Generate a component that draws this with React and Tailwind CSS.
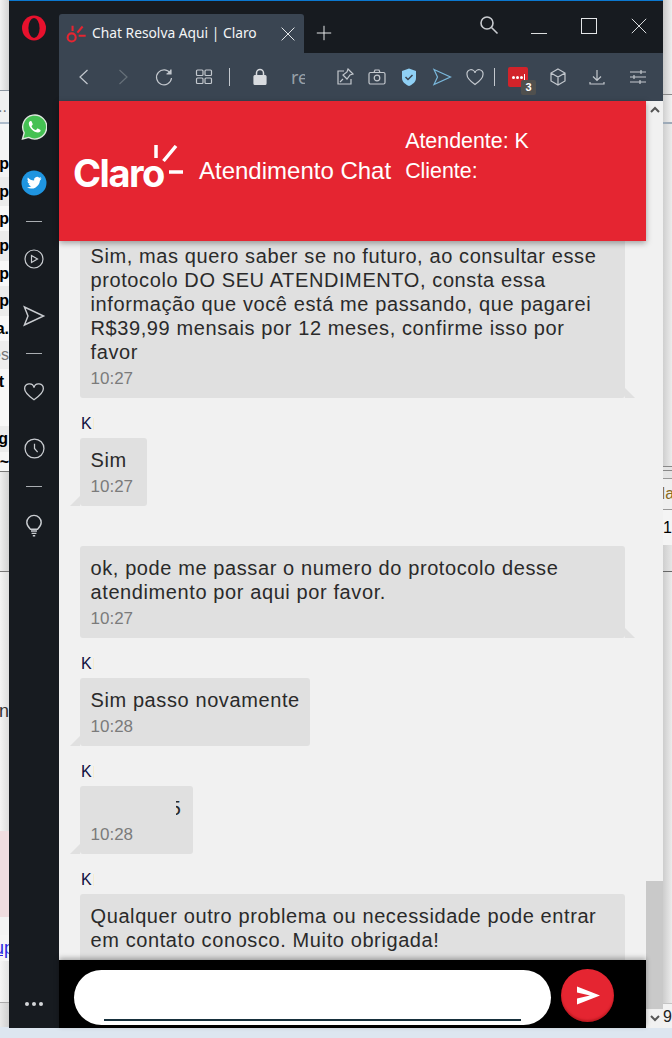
import React from 'react';

const leftRows = [
    { h: 'h-[90px]', bg: 'bg-gradient-to-r from-[#f2f2f2] to-[#d4d4d4]' },
    { h: 'h-px', bg: 'bg-[#8d96a0]' },
    { h: 'h-[31px]', bg: 'bg-[#f0f0f0]', text: '..', cls: 'text-[#777] text-[13px] mr-[2px]' },
    { h: 'h-[2px]', bg: 'bg-[#aebccb]' },
    { h: 'h-[26px]', bg: 'bg-[#f6f6f6]' },
    { h: 'h-[27px]', bg: 'bg-[#f4f4f4]', text: 'p', cls: 'font-bold' },
    { h: 'h-[29px]', bg: 'bg-[#ececec]', text: 'p', cls: 'font-bold' },
    { h: 'h-[25px]', bg: 'bg-[#f8f8f8]', text: 'p', cls: 'font-bold' },
    { h: 'h-[30px]', bg: 'bg-[#ececec]', text: 'p', cls: 'font-bold' },
    { h: 'h-[25px]', bg: 'bg-[#f8f8f8]', text: 'p', cls: 'font-bold' },
    { h: 'h-[30px]', bg: 'bg-[#ececec]', text: 'p', cls: 'font-bold' },
    { h: 'h-[25px]', bg: 'bg-[#f8f8f8]', text: 'a.', cls: 'font-bold' },
    { h: 'h-[28px]', bg: 'bg-[#eeeeee]', text: 'es', cls: 'text-[#777]' },
    { h: 'h-[25px]', bg: 'bg-[#f8f8f8]', text: 't', cls: 'font-bold mr-[5px]' },
    { h: 'h-[32px]', bg: 'bg-[#f8f8f8]' },
    { h: 'h-[26px]', bg: 'bg-[#ececec]', text: 'g', cls: 'font-bold mr-px' },
    { h: 'h-[19px]', bg: 'bg-[#f6f6f6]', text: '~', cls: 'font-bold' },
    { h: 'h-px', bg: 'bg-[#777]' },
    { h: 'h-[99px]', bg: 'bg-gradient-to-r from-[#eeeeee] to-[#d2d2d2]' },
    { h: 'h-px', bg: 'bg-[#777]' },
    { h: 'h-[125px]', bg: 'bg-gradient-to-r from-[#f4f4f4] to-[#dddddd]' },
    { h: 'h-[27px]', bg: 'bg-gradient-to-r from-[#f4f4f4] to-[#dddddd]', text: 'n', cls: 'text-[#333] !text-[18px]' },
    { h: 'h-[107px]', bg: 'bg-gradient-to-r from-[#f4f4f4] to-[#dddddd]' },
    { h: 'h-[86px]', bg: 'bg-[#f0dde0]' },
    { h: 'h-[18px]', bg: 'bg-[#f4f4f4]' },
    { h: 'h-[26px]', bg: 'bg-[#f6f6f6]', text: 'up', cls: 'text-[#2a2ae0] underline !text-[18px] -mr-[5px]' },
    { h: 'h-[41px]', bg: 'bg-gradient-to-r from-[#f6f6f6] to-[#e2e2e2]' },
    { h: 'h-px', bg: 'bg-[#aaa]' },
    { h: 'h-[24px]', bg: 'bg-gradient-to-r from-[#e8e8e8] to-[#cfcfcf]' },
];

const rightRows = [
    { h: 'h-[94px]', bg: 'bg-gradient-to-r from-[#c8c8c8] to-[#efefef]' },
    { h: 'h-px', bg: 'bg-[#888]' },
    { h: 'h-[27px]', bg: 'bg-gradient-to-r from-[#d0d0d0] to-[#f2f2f2]' },
    { h: 'h-[2px]', bg: 'bg-[#9daab8]' },
    { h: 'h-[342px]', bg: 'bg-gradient-to-r from-[#cfcfcf] to-[#ececec]' },
    { h: 'h-px', bg: 'bg-[#888]' },
    { h: 'h-[3px]', bg: 'bg-[#e4e4e4]' },
    { h: 'h-px', bg: 'bg-[#888]' },
    { h: 'h-[7px]', bg: 'bg-[#e4e4e4]' },
    { h: 'h-px', bg: 'bg-[#999]' },
    { h: 'h-[30px]', bg: 'bg-[#efefef]', text: 'Ma', cls: 'text-[#8a6a20] -ml-[11px]' },
    { h: 'h-px', bg: 'bg-[#999]' },
    { h: 'h-[35px]', bg: 'bg-[#f4f4f4]', text: '10', cls: 'text-black' },
    { h: 'h-[26px]', bg: 'bg-gradient-to-r from-[#cfcfcf] to-[#e6e6e6]' },
    { h: 'h-px', bg: 'bg-[#666]' },
    { h: 'h-[431px]', bg: 'bg-gradient-to-r from-[#cdcdcd] to-[#ececec]' },
    { h: 'h-px', bg: 'bg-[#c4c4c4]' },
    { h: 'h-[25px]', bg: 'bg-[#f2f2f2]', text: '90', cls: 'text-[#222]' },
];

const Strip = ({ rows, align }) => (
    <div className="w-[9px] shrink-0 flex flex-col overflow-hidden">
        {rows.map((r, i) => (
            <div key={i} className={`${r.h} ${r.bg} shrink-0 flex items-center overflow-hidden ${align}`}>
                {r.text && <span className={`text-[16px] leading-none whitespace-nowrap shrink-0 ${r.cls}`}>{r.text}</span>}
            </div>
        ))}
    </div>
);

const Ico = ({ size = 20, children, className = '' }) => (
    <svg width={size} height={size} viewBox="0 0 20 20" fill="none" stroke="currentColor" strokeWidth="1.2" className={`shrink-0 ${className}`}>
        {children}
    </svg>
);

const Rays = ({ className, width }) => (
    <svg width={width} viewBox="0 0 24 24" fill="none" stroke="currentColor" strokeWidth="2.4" className={className}>
        <circle cx="6.5" cy="16.5" r="4.6" />
        <path d="M7.5 3v6M13 11l6-7M14.5 14.5h8" />
    </svg>
);

const Sidebar = () => (
    <div className="w-[50px] shrink-0 bg-[#171b20] border-t border-[#0b78d0] flex flex-col items-center text-[#c9ccd0]">
        {/* Opera */}
        <svg width="24" height="26" viewBox="0 0 24 26" className="mt-[14px] shrink-0">
            <ellipse cx="12" cy="13" rx="12" ry="12.5" fill="#e8112d" />
            <ellipse cx="12" cy="13" rx="5.6" ry="10" fill="#171b20" />
        </svg>
        {/* WhatsApp */}
        <svg width="26" height="26" viewBox="0 0 26 26" className="mt-[73px] shrink-0">
            <path d="M1.5 25l1.7-6.2A12 12 0 1 1 7.7 23.4z" fill="#45c153" stroke="#dfe8df" strokeWidth="1.4" />
            <path d="M9.4 6.9c-.5 0-1.6.8-1.6 2.6 0 4 5 9 9.2 9 1.8 0 2.6-1.2 2.6-2 0-.4-.1-.6-.4-.7l-2.4-1.2c-.3-.1-.5-.1-.7.2l-1 1.2c-.2.2-.4.2-.7.1-1.700-.8-3-2.100-3.800-3.700-.1-.3 0-.5.200-.7l.8-1c.2-.2.2-.4.1-.7L10.600 7.400c-.2-.4-.5-.5-1.200-.5z" fill="#fff" />
        </svg>
        {/* Twitter */}
        <svg width="26" height="26" viewBox="0 0 26 26" className="mt-[30px] shrink-0">
            <circle cx="13" cy="13" r="12.500" fill="#1f95e0" />
            <path d="M20.500 8.300c-.5.2-1.100.4-1.700.5.600-.4 1.100-1 1.300-1.700-.6.300-1.200.600-1.900.700a3 3 0 0 0-5.100 2.700c-2.500-.1-4.700-1.300-6.200-3.100-.8 1.400-.4 3.100.900 4-.5 0-1-.1-1.300-.4 0 1.500 1 2.700 2.400 3-.4.100-.9.100-1.300 0 .4 1.200 1.500 2 2.800 2.100a6 6 0 0 1-4.400 1.200A8.500 8.500 0 0 0 18.900 10.800c.6-.7 1.200-1.500 1.600-2.500z" fill="#fff" />
        </svg>
        <div className="mt-[25px] w-4 h-px bg-[#aaaeb2] shrink-0" />
        <Ico size={20} className="mt-[27px]">
            <circle cx="10" cy="10" r="9" />
            <path d="M7.500 6.500v7l6-3.500z" />
        </Ico>
        <Ico size={24} className="mt-[35px]">
            <path d="M2 2.500L18 10 2 17.500 5 10z" />
        </Ico>
        <div className="mt-[25px] w-4 h-px bg-[#aaaeb2] shrink-0" />
        <Ico size={22} className="mt-[27px]">
            <path d="M10 17C5 13.500 1.500 10.500 1.500 7a4.300 4.300 0 0 1 8.500-1 4.300 4.300 0 0 1 8.500 1c0 3.500-3.500 6.500-8.500 10z" />
        </Ico>
        <Ico size={21} className="mt-[35px]">
            <circle cx="10" cy="10" r="9" />
            <path d="M10 5.500V10l3 3.500" />
        </Ico>
        <div className="mt-[27px] w-4 h-px bg-[#aaaeb2] shrink-0" />
        <Ico size={24} className="mt-[26px]">
            <path d="M7 13.500C5.500 12 4 10.500 4 8a6 6 0 0 1 12 0c0 2.500-1.500 4-3 5.500zM7.500 15h5M8 17h4M9 19h2" />
        </Ico>
        <div className="mt-auto mb-[22px] flex gap-[3px]">
            <span className="w-1 h-1 rounded-full bg-[#d4d6d8]" />
            <span className="w-1 h-1 rounded-full bg-[#d4d6d8]" />
            <span className="w-1 h-1 rounded-full bg-[#d4d6d8]" />
        </div>
    </div>
);

const TabBar = () => (
    <div className="h-[53px] shrink-0 bg-[#171b20] border-t border-[#0b78d0] flex items-end text-[#d8dadc]">
        <div className="w-[245px] h-[39px] bg-[#3a4552] rounded-t-[3px] flex items-center pl-2 shrink-0">
            <Rays width={21} className="text-[#e52531] shrink-0 -ml-[1px]" />
            <span className="ml-[5px] text-[13.8px] text-[#f4f5f6] whitespace-nowrap font-['Noto_Sans',sans-serif]">Chat Resolva Aqui | Claro</span>
            <Ico size={16} className="ml-auto mr-[8px] text-[#eceef0]"><path d="M2 2l16 16M18 2L2 18" /></Ico>
        </div>
        <Ico size={16} className="ml-[12px] mb-[12px] text-[#eceef0]"><path d="M10 1v18M1 10h18" /></Ico>
        <div className="ml-auto flex items-start self-start mt-[14px]">
            <Ico size={20} className="text-[#c9ccd0] mr-[32px]"><circle cx="8" cy="8" r="6" strokeWidth="1.600" /><path d="M12.500 12.500L18.500 18.500" strokeWidth="1.600" /></Ico>
            <span className="w-4 h-px bg-[#dcdedf] mt-[18px] mr-[34px]" />
            <span className="w-4 h-4 border border-[#e4e6e8] mt-[3px] mr-[34px]" />
            <Ico size={16} className="mt-[3px] mr-[16px] text-[#e4e6e8]"><path d="M1 1l18 18M19 1L1 19" /></Ico>
        </div>
    </div>
);

const Toolbar = () => (
    <div className="h-[48px] shrink-0 bg-[#3a4552] flex items-center text-[#c3c8ce]">
        <Ico className="ml-[15px]"><path d="M13.500 3L6 10l7.500 7" /></Ico>
        <Ico className="ml-[19px] text-[#667079]"><path d="M6.500 3L14 10l-7.500 7" /></Ico>
        <Ico className="ml-[21px]"><path d="M16.500 6.500A7.500 7.500 0 1 0 17.500 11" /><path d="M17 2.500v4.500h-4.500" fill="currentColor" /></Ico>
        <Ico className="ml-[20px]"><rect x="2.500" y="3" width="6.500" height="5.500" rx="1" /><rect x="11" y="3" width="6.500" height="5.500" rx="1" /><rect x="2.500" y="11" width="6.500" height="5.500" rx="1" /><rect x="11" y="11" width="6.500" height="5.500" rx="1" /></Ico>
        <span className="ml-[15px] w-px h-[18px] bg-[#c3c8ce]" />
        <Ico className="ml-[20px] text-[#d8dbdf]"><rect x="4" y="8.500" width="12" height="9" rx="1" fill="currentColor" /><path d="M6.500 8.500V6a3.500 3.500 0 0 1 7 0v2.500" strokeWidth="1.500" /></Ico>
        <span className="ml-[21px] w-[14px] overflow-hidden text-[18px] text-[#98a0a8] font-['Noto_Sans',sans-serif] whitespace-nowrap">re</span>
        <Ico className="ml-[30px]"><path d="M9 4H3v13h13v-5" /><path d="M13 2l5 5-3 1-3 4-4-4 4-3zM8 12l-3 3" /></Ico>
        <Ico className="ml-[12px]"><rect x="2" y="5.500" width="16" height="11.500" rx="1.500" /><path d="M7 5.500L8 3h4l1 2.500" /><circle cx="10" cy="11" r="2.800" /></Ico>
        <svg width="20" height="20" viewBox="0 0 20 20" className="ml-[12px] shrink-0">
            <path d="M10 1.500l7 2.500v7c0 4-3.500 6.500-7 8-3.500-1.500-7-4-7-8V4z" fill="#8fd0f5" />
            <path d="M6.500 10l2.500 2.500 4.500-4.500" fill="none" stroke="#3a4552" strokeWidth="1.500" />
        </svg>
        <Ico className="ml-[13px] text-[#7ab8dc]"><path d="M2 2.500L18.500 10 2 17.500 5.500 10z" /></Ico>
        <Ico className="ml-[13px]"><path d="M10 17.500C5 14 2 11 2 7.500a4 4 0 0 1 8-1.500 4 4 0 0 1 8 1.500c0 3.500-3 6.500-8 10z" /></Ico>
        <span className="ml-[9px] w-px h-[18px] bg-[#c3c8ce]" />
        <div className="relative ml-[13px] w-5 h-5 bg-[#d2232a] rounded-[2px] flex items-center justify-center gap-px shrink-0">
            <span className="w-[3px] h-[3px] rounded-full bg-white" />
            <span className="w-[3px] h-[3px] rounded-full bg-white" />
            <span className="w-[3px] h-[3px] rounded-full bg-white" />
            <span className="w-px h-[7px] bg-white" />
            <span className="absolute -right-[8px] -bottom-[8px] w-[15px] h-[15px] rounded-[2px] bg-[#50504e] text-white text-[11px] font-bold leading-[15px] text-center font-['Liberation_Sans',sans-serif]">3</span>
        </div>
        <Ico className="ml-[20px]"><path d="M10 2l7 4v8l-7 4-7-4V6zM3 6l7 4 7-4M10 10v8" /></Ico>
        <Ico className="ml-[19px]"><path d="M10 3v10M6 9.500l4 4 4-4M3 15v2h14v-2" /></Ico>
        <Ico className="ml-[21px]"><path d="M2 5h16M2 10h16M2 15h16M13 3v4M6 8v4M12 13v4" /></Ico>
    </div>
);

const Header = () => (
    <div className="relative z-10 h-[140px] shrink-0 bg-[#e52531] text-white flex items-center shadow-[0_2px_6px_rgba(0,0,0,0.35)] font-['Liberation_Sans',sans-serif]">
        <div className="relative ml-[15px] w-[110px] h-[50px] shrink-0">
            <span className="absolute -left-[1px] top-[2px] text-[38px] leading-[50px] font-bold tracking-[-1.500px] font-['Inter',sans-serif]">Claro</span>
            <svg width="30" height="30" viewBox="0 0 30 30" fill="none" stroke="#fff" strokeWidth="3.500" className="absolute left-[80px] -top-[1px]">
                <path d="M2 0v13M9.500 16L22 1M15 27h14" />
            </svg>
        </div>
        <span className="ml-[15px] text-[24px] whitespace-nowrap -mt-[1px]">Atendimento Chat</span>
        <div className="ml-[14px] flex flex-col gap-[5px] text-[21.4px] leading-[25px] mb-[30px]">
            <span>Atendente: K</span>
            <span>Cliente:</span>
        </div>
    </div>
);

const Bubble = ({ children, time, side, className = '' }) => (
    <div className={`relative bg-[#e0e0e0] rounded-[3px] pt-[10px] pb-[7px] px-[10.5px] text-[20px] leading-[24px] tracking-[0.6px] text-[#2a2a2a] ${className}`}>
        {children}
        {time && <div className="mt-[3px] text-[17px] leading-[24px] tracking-normal text-[#7b7b7b]">{time}</div>}
        {side === 'right' && <span className="absolute bottom-0 -right-[10px] w-0 h-0 border-r-[10px] border-r-transparent border-b-[10px] border-b-[#e0e0e0]" />}
        {side === 'left' && <span className="absolute bottom-0 -left-[10px] w-0 h-0 border-l-[10px] border-l-transparent border-b-[10px] border-b-[#e0e0e0]" />}
    </div>
);

const Agent = () => (
    <div className="mt-[18px] mb-[6px] h-[16px] flex items-center pl-px text-[16px] leading-none text-[#101040]">
        K<span className="ml-px w-px h-[12px] bg-[#f3ecd2]" />
    </div>
);

const Chat = () => (
    <div className="flex-1 min-h-0 overflow-hidden bg-[#f1f1f1] px-[21px] font-['Liberation_Sans',sans-serif]">
        <Bubble time="10:27" side="right" className="-mt-[7px]">
            Sim, mas quero saber se no futuro, ao consultar esse protocolo DO SEU ATENDIMENTO, consta essa informação que você está me passando, que pagarei R$39,99 mensais por 12 meses, confirme isso por favor
        </Bubble>
        <Agent />
        <Bubble time="10:27" side="left" className="w-[67px]">Sim</Bubble>
        <Bubble time="10:27" side="right" className="mt-[40px]">
            ok, pode me passar o numero do protocolo desse atendimento por aqui por favor.
        </Bubble>
        <Agent />
        <Bubble time="10:28" side="left" className="w-[230px] whitespace-nowrap">Sim passo novamente</Bubble>
        <Agent />
        <Bubble time="10:28" side="left" className="w-[113px]">
            <div className="flex justify-end pr-[1px] h-[24px]">
                <span className="w-[6px] overflow-hidden flex justify-end">5</span>
            </div>
        </Bubble>
        <Agent />
        <Bubble className="!pb-[30px]">
            Qualquer outro problema ou necessidade pode entrar em contato conosco. Muito obrigada!
        </Bubble>
    </div>
);

const InputBar = () => (
    <div className="relative z-10 h-[68px] shrink-0 bg-black flex items-start pl-[15px] shadow-[0_-2px_5px_rgba(0,0,0,0.3)]">
        <div className="mt-[10px] w-[477px] h-[55px] bg-white rounded-[28px] flex items-end justify-center pb-[4px] shrink-0">
            <span className="w-[417px] h-[2px] bg-[#17303c]" />
        </div>
        <div className="ml-[10px] mt-[9px] w-[53px] h-[53px] rounded-full bg-[#e52531] flex items-center justify-center shadow-[inset_0_-2px_2px_rgba(120,0,0,0.35)] shrink-0">
            <svg width="24" height="20" viewBox="0 0 24 20" fill="#fff">
                <path d="M1 0.500L24 9.500 1 18.500V12.500L14 9.500 1 6.500z" />
            </svg>
        </div>
    </div>
);

const Scrollbar = () => (
    <div className="w-[17px] shrink-0 bg-[#f1f1f1] flex flex-col items-center text-[#555]">
        <Ico size={10} className="mt-[4px] shrink-0"><path d="M2 14l8-8 8 8" strokeWidth="4" /></Ico>
        <div className="mt-auto w-full h-[128px] bg-[#c9c9c9]" />
        <Ico size={10} className="my-[4px] mb-[5px] shrink-0"><path d="M2 6l8 8 8-8" strokeWidth="4" /></Ico>
    </div>
);

const App = () => {
    return (
        <div className="w-[672px] h-[1038px] flex flex-col overflow-hidden bg-[#dde6f0] font-['Liberation_Sans',sans-serif]">
            <div className="h-[1028px] shrink-0 flex">
                <Strip rows={leftRows} align="justify-end" />
                <Sidebar />
                <div className="w-[604px] shrink-0 flex flex-col">
                    <TabBar />
                    <Toolbar />
                    <div className="flex-1 min-h-0 flex">
                        <div className="w-[587px] shrink-0 flex flex-col">
                            <Header />
                            <Chat />
                            <InputBar />
                        </div>
                        <Scrollbar />
                    </div>
                </div>
                <Strip rows={rightRows} align="justify-start" />
            </div>
        </div>
    );
};

export default App;
